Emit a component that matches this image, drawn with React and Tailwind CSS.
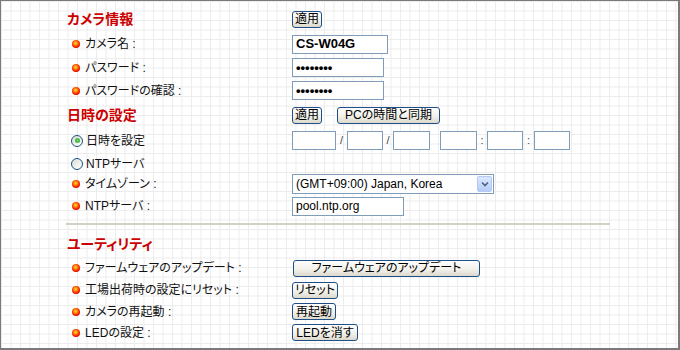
const font = "font-['Liberation_Sans','Noto_Sans_CJK_JP',sans-serif] [font-feature-settings:'palt']";

function Bullet() {
  return (
    <span className="mr-[5px] ml-[6px] inline-block h-[8px] w-[8px] shrink-0 rounded-full bg-[radial-gradient(circle_at_45%_40%,#ffe04a_0%,#ff7000_35%,#e80000_70%,#a80000_100%)]" />
  );
}

function Radio({ checked }) {
  return (
    <span className="ml-[5px] mr-[3px] flex h-[12px] w-[12px] shrink-0 items-center justify-center rounded-full border border-[#1c5180] bg-[linear-gradient(135deg,#dcdcd6,#ffffff)]">
      {checked && <span className="h-[5px] w-[5px] rounded-full bg-[radial-gradient(circle,#6fd36a,#21a121)]" />}
    </span>
  );
}

function Btn({ children, w }) {
  return (
    <button
      className={`flex h-[17px] items-center justify-center whitespace-nowrap rounded-[3px] border border-[#1f4f86] bg-[linear-gradient(to_bottom,#ffffff,#f0efe8_60%,#dcd9cc)] px-0 text-[12px] leading-none text-black ${w}`}
    >
      {children}
    </button>
  );
}

function Box({ w, children, bold }) {
  return (
    <div
      className={`flex h-[19px] items-center border border-[#7f9db9] bg-white px-[3px] text-black ${w} ${
        bold ? "text-[13px] font-bold" : "text-[12px]"
      }`}
    >
      {children}
    </div>
  );
}

function Row({ h, left, children }) {
  return (
    <div className={`flex items-center ${h}`}>
      <div className="flex w-[226px] items-center text-[12px] text-[#111]">{left}</div>
      <div className="flex items-center">{children}</div>
    </div>
  );
}

function Label({ children }) {
  return (
    <>
      <Bullet />
      <span>{children}</span>
    </>
  );
}

function Heading({ children }) {
  return <span className="ml-[1px] text-[14px] font-bold text-[#cc0000]">{children}</span>;
}

function Sep({ w, children }) {
  return <span className={`text-center text-[11px] text-[#444] ${w}`}>{children}</span>;
}

export default function App() {
  return (
    <div
      className={`h-[350px] w-[680px] overflow-hidden border-t border-l border-r-2 border-b-2 border-[#7a7a7a] bg-white bg-[linear-gradient(to_right,#ebebeb_1px,transparent_1px),linear-gradient(to_bottom,#ebebeb_1px,transparent_1px)] bg-[size:9.5px_9.5px] pl-[65px] pt-[6px] ${font}`}
    >
      <Row h="h-[24px]" left={<Heading>カメラ情報</Heading>}>
        <Btn w="w-[30px]">適用</Btn>
      </Row>
      <Row h="h-[26px]" left={<Label>カメラ名 :</Label>}>
        <Box w="w-[96px]" bold>
          CS-W04G
        </Box>
      </Row>
      <Row h="h-[21px]" left={<Label>パスワード :</Label>}>
        <Box w="w-[92px]" bold>
          ••••••••
        </Box>
      </Row>
      <Row h="h-[25px]" left={<Label>パスワードの確認 :</Label>}>
        <Box w="w-[92px]" bold>
          ••••••••
        </Box>
      </Row>
      <Row h="h-[24px]" left={<Heading>日時の設定</Heading>}>
        <Btn w="w-[30px]">適用</Btn>
        <div className="ml-[15px]">
          <Btn w="w-[103px]">PCの時間と同期</Btn>
        </div>
      </Row>
      <Row
        h="h-[27px]"
        left={
          <>
            <Radio checked />
            <span>日時を設定</span>
          </>
        }
      >
        <Box w="w-[44px]" />
        <Sep w="w-[11px]">/</Sep>
        <Box w="w-[36px]" />
        <Sep w="w-[10px]">/</Sep>
        <Box w="w-[37px]" />
        <Sep w="w-[10px]" />
        <Box w="w-[37px]" />
        <Sep w="w-[10px]">:</Sep>
        <Box w="w-[36px]" />
        <Sep w="w-[11px]">:</Sep>
        <Box w="w-[36px]" />
      </Row>
      <Row
        h="h-[19px]"
        left={
          <>
            <Radio />
            <span>NTPサーバ</span>
          </>
        }
      />
      <Row h="h-[22px]" left={<Label>タイムゾーン :</Label>}>
        <div className="flex h-[20px] w-[202px] items-center justify-between border border-[#7f9db9] bg-white pl-[3px] text-[12px] text-black">
          <span>(GMT+09:00) Japan, Korea</span>
          <span className="m-[1px] flex h-[16px] w-[15px] items-center justify-center rounded-[2px] border border-[#b4c8f4] bg-[linear-gradient(to_bottom,#dde8fe,#b6cbf7)]">
            <svg width="8" height="6" viewBox="0 0 8 6">
              <path d="M1 1.5 L4 4.5 L7 1.5" fill="none" stroke="#4d6185" strokeWidth="1.6" />
            </svg>
          </span>
        </div>
      </Row>
      <Row h="h-[22px]" left={<Label>NTPサーバ :</Label>}>
        <Box w="w-[112px]">pool.ntp.org</Box>
      </Row>
      <div className="flex h-[14px] items-center">
        <div className="h-[2px] w-[544px] bg-[#d4d0c8]" />
      </div>
      <Row h="h-[26px]" left={<Heading>ユーティリティ</Heading>}></Row>
      <Row h="h-[22px]" left={<Label>ファームウェアのアップデート :</Label>}>
        <div className="ml-[1px]">
          <Btn w="w-[187px]">ファームウェアのアップデート</Btn>
        </div>
      </Row>
      <Row h="h-[22px]" left={<Label>工場出荷時の設定にリセット :</Label>}>
        <Btn w="w-[46px]">リセット</Btn>
      </Row>
      <Row h="h-[21px]" left={<Label>カメラの再起動 :</Label>}>
        <Btn w="w-[44px]">再起動</Btn>
      </Row>
      <Row h="h-[21px]" left={<Label>LEDの設定 :</Label>}>
        <Btn w="w-[66px]">LEDを消す</Btn>
      </Row>
    </div>
  );
}
